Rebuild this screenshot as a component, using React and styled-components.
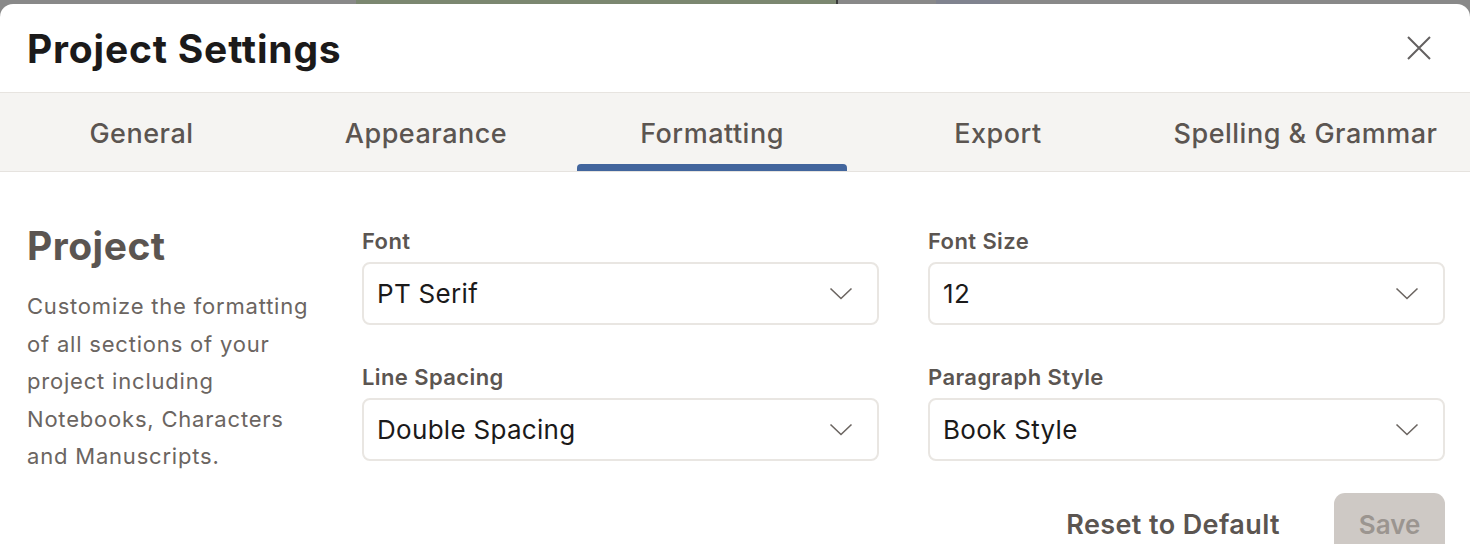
import styled, { createGlobalStyle } from "styled-components";

const GlobalStyle = createGlobalStyle`
  html, body {
    margin: 0;
    background: #898989;
    font-family: "Inter", "Liberation Sans", sans-serif;
  }
  * { box-sizing: border-box; }
`;

const tabs = ["General", "Appearance", "Formatting", "Export", "Spelling & Grammar"];

const fields = [
    { label: "Font", value: "PT Serif" },
    { label: "Font Size", value: "12" },
    { label: "Line Spacing", value: "Double Spacing" },
    { label: "Paragraph Style", value: "Book Style" },
];

const Chevron = () => (
    <svg width="24" height="13" viewBox="0 0 24 13" fill="none">
        <polyline points="1.5,1.5 12,11.5 22.5,1.5" stroke="#6b6561" strokeWidth="1.6" />
    </svg>
);

const CloseIcon = () => (
    <svg width="24" height="24" viewBox="0 0 24 24" fill="none">
        <path d="M1 1 L23 23 M23 1 L1 23" stroke="#636060" strokeWidth="2" />
    </svg>
);

const App = () => {
    return (
        <>
            <GlobalStyle />
            {/* what shows behind the dialog */}
            <Backdrop>
                <Strip $w="356px" $bg="#898989" />
                <Strip $w="480px" $bg="#7b8770" />
                <Strip $w="2px" $bg="#3a3a3a" />
                <Strip $w="98px" $bg="#898989" />
                <Strip $w="64px" $bg="#80838f" />
                <Strip $bg="#898989" $grow />
            </Backdrop>
            <Modal>
                <Header>
                    <Title>Project Settings</Title>
                    <CloseBtn aria-label="close"><CloseIcon /></CloseBtn>
                </Header>
                <TabBar>
                    {tabs.map((t, i) => (
                        <Tab
                            key={t}
                            $active={t === "Formatting"}
                            $w={i === 0 ? "283px" : i === tabs.length - 1 ? null : "286px"}
                        >
                            {t}
                        </Tab>
                    ))}
                </TabBar>
                <Body>
                    <Intro>
                        <SectionTitle>Project</SectionTitle>
                        <Description>
                            Customize the formatting<br />
                            of all sections of your<br />
                            project including<br />
                            Notebooks, Characters<br />
                            and Manuscripts.
                        </Description>
                    </Intro>
                    <FieldGrid>
                        {fields.map((f) => (
                            <Field key={f.label}>
                                <Label>{f.label}</Label>
                                <Select>
                                    <span>{f.value}</span>
                                    <Chevron />
                                </Select>
                            </Field>
                        ))}
                    </FieldGrid>
                </Body>
                <Footer>
                    <TextButton>Reset to Default</TextButton>
                    <SaveButton disabled>Save</SaveButton>
                </Footer>
            </Modal>
        </>
    );
};

const Backdrop = styled.div`
    display: flex;
    height: 4px;
`;

const Strip = styled.div`
    width: ${(p) => p.$w || "auto"};
    flex: ${(p) => (p.$grow ? 1 : "none")};
    background: ${(p) => p.$bg};
`;

const Modal = styled.div`
    background: #ffffff;
    border-radius: 13px 13px 0 0;
    min-height: 600px;
`;

const Header = styled.div`
    height: 89px;
    display: flex;
    align-items: center;
    justify-content: space-between;
    padding: 0 39px 0 27px;
    border-bottom: 1px solid #e7e4e0;
`;

const Title = styled.h1`
    margin: 0;
    font-size: 39px;
    font-weight: 700;
    color: #1b1a1a;
    letter-spacing: 0.8px;
`;

const CloseBtn = styled.button`
    border: none;
    background: none;
    padding: 0;
    display: flex;
    cursor: pointer;
`;

const TabBar = styled.div`
    display: flex;
    height: 79px;
    background: #f5f4f2;
    border-bottom: 1px solid #e6e3df;
`;

const Tab = styled.div`
    position: relative;
    width: ${(p) => p.$w || "auto"};
    flex: ${(p) => (p.$w ? "none" : 1)};
    display: flex;
    align-items: center;
    justify-content: center;
    padding-top: 2px;
    font-size: 27px;
    font-weight: 500;
    letter-spacing: 0.5px;
    color: #5b5551;
    white-space: nowrap;

    &::after {
        content: "";
        display: ${(p) => (p.$active ? "block" : "none")};
        position: absolute;
        left: 8px;
        right: 8px;
        bottom: 0;
        height: 7px;
        border-radius: 4px 4px 0 0;
        background: #42659d;
    }
`;

const Body = styled.div`
    display: grid;
    grid-template-columns: 286px 1fr;
    column-gap: 49px;
    padding: 56px 25px 0 27px;
`;

const Intro = styled.div`
    display: flex;
    flex-direction: column;
`;

const SectionTitle = styled.h2`
    margin: 0;
    font-size: 39px;
    font-weight: 700;
    letter-spacing: 0.5px;
    color: #5b5551;
    line-height: 36px;
`;

const Description = styled.p`
    margin: 24px 0 0;
    font-size: 22px;
    letter-spacing: 0.8px;
    line-height: 37.5px;
    color: #6b6561;
    white-space: nowrap;
`;

const FieldGrid = styled.div`
    display: grid;
    grid-template-columns: 1fr 1fr;
    column-gap: 49px;
    row-gap: 39px;
    align-self: start;
`;

const Field = styled.div`
    display: flex;
    flex-direction: column;
    gap: 7px;
`;

const Label = styled.label`
    font-size: 22px;
    font-weight: 600;
    letter-spacing: 0.4px;
    color: #5b5551;
    line-height: 27px;
`;

const Select = styled.div`
    height: 63px;
    border: 2px solid #e9e6e2;
    border-radius: 8px;
    display: flex;
    align-items: center;
    justify-content: space-between;
    padding: 0 24px 0 13px;
    font-size: 26px;
    letter-spacing: 0.3px;
    color: #1b1a1a;
`;

const Footer = styled.div`
    display: flex;
    justify-content: flex-end;
    align-items: center;
    gap: 54px;
    padding: 17px 25px 0 0;
`;

const TextButton = styled.button`
    border: none;
    background: none;
    padding: 0;
    font-family: inherit;
    font-size: 27px;
    font-weight: 600;
    letter-spacing: 0.4px;
    color: #5b5551;
    cursor: pointer;
`;

const SaveButton = styled.button`
    width: 111px;
    height: 64px;
    border: none;
    border-radius: 11px;
    background: #cec9c5;
    font-family: inherit;
    font-size: 26px;
    font-weight: 600;
    color: #9b9590;
`;

export default App;
